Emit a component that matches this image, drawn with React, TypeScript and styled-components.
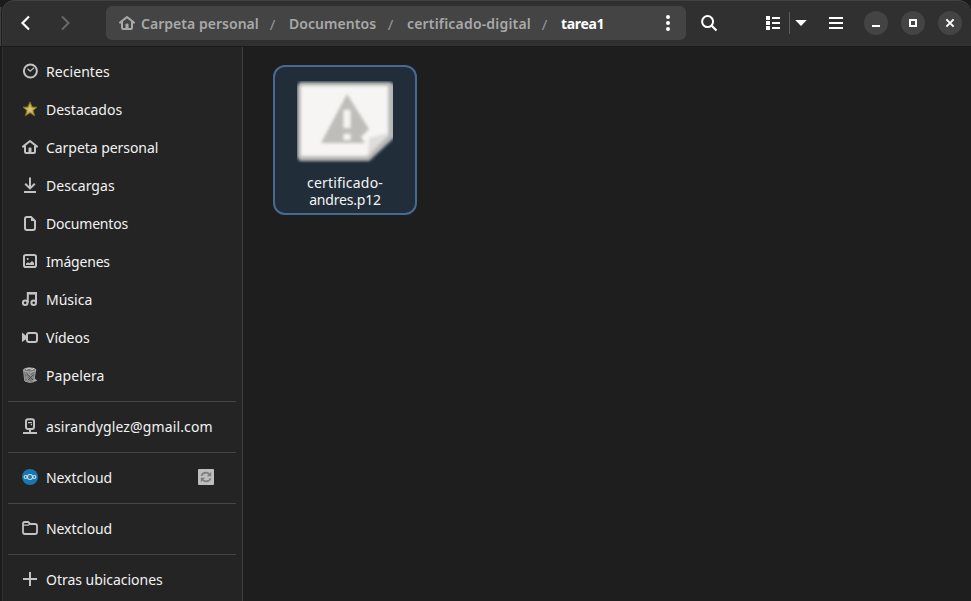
import React from "react";
import styled, { createGlobalStyle } from "styled-components";

const Global = createGlobalStyle`
  *, *::before, *::after { box-sizing: border-box; }
  html, body { margin: 0; height: 100%; overflow: hidden; }
  body { background: #1b1b1e; font-family: "Noto Sans", "Open Sans", sans-serif; }
`;

const Desktop = styled.div`
  width: 971px;
  height: 601px;
  padding-left: 2px;
  overflow: hidden;
  background: linear-gradient(to bottom, #1c1c1c 0 7px, #414141 7px 46px, #1a1a1f 46px);
`;

const Window = styled.main`
  width: 969px;
  height: 601px;
  display: flex;
  flex-direction: column;
  overflow: hidden;
  border-radius: 12px 12px 0 0;
  background: #1e1e1e;
  box-shadow: 0 0 0 1px #1b1b1b;
`;

const HeaderBar = styled.header`
  flex: none;
  height: 46px;
  display: flex;
  align-items: center;
  background: #303030;
  box-shadow: inset 0 1px #414141, inset 1px 0 #383838;
  border-radius: 12px 12px 0 0;
  color: #fff;
`;

const IconButton = styled.button<{ $w?: number; $dim?: boolean }>`
  width: ${(p) => p.$w ?? 34}px;
  height: 34px;
  flex: none;
  padding: 0;
  border: 0;
  display: flex;
  align-items: center;
  justify-content: center;
  background: none;
  color: ${(p) => (p.$dim ? "#686868" : "#fff")};
`;

const NavButtons = styled.div`
  display: flex;
  gap: 5px;
  width: 104px;
  padding-left: 7px;
`;

const PathBar = styled.nav`
  flex: none;
  width: 580px;
  height: 34px;
  display: flex;
  align-items: center;
  padding-left: 13px;
  border-radius: 6px;
  background: #444;
  color: #a5a5a5;
`;

const Crumb = styled.span<{ $w: number; $ls?: number; $current?: boolean }>`
  width: ${(p) => p.$w}px;
  flex: none;
  margin-top: 2px;
  white-space: nowrap;
  font-size: 14px;
  line-height: 20px;
  font-weight: ${(p) => (p.$current ? 700 : 600)};
  letter-spacing: ${(p) => p.$ls ?? 0}px;
  color: ${(p) => (p.$current ? "#fff" : "#a9a9a9")};
`;

const Slash = styled.span`
  width: 31px;
  flex: none;
  margin-top: 2px;
  padding-right: 2px;
  text-align: center;
  font-size: 15px;
  line-height: 20px;
  color: #979797;
`;

const CrumbIcon = styled.span`
  width: 22px;
  height: 16px;
  flex: none;
  color: #a9a9a9;
`;

const PathMenu = styled.div`
  margin-left: auto;
  width: 36px;
  display: flex;
  justify-content: center;
`;

const Tools = styled.div`
  flex: 1;
  display: flex;
  align-items: center;
  padding-left: 6px;
`;

const ViewSwitch = styled.div`
  display: flex;
  align-items: center;
  margin-left: 30px;
  margin-right: 7px;
`;

const Divider = styled.span`
  width: 1px;
  height: 22px;
  margin-left: -1px;
  background: #5c5c5c;
`;

const WindowControls = styled.div`
  display: flex;
  gap: 13px;
  margin-left: 11px;
`;

const ControlButton = styled.button`
  width: 24px;
  height: 24px;
  padding: 0;
  border: 0;
  border-radius: 50%;
  display: flex;
  align-items: center;
  justify-content: center;
  background: #444;
  color: #fff;
`;

const Body = styled.div`
  flex: 1;
  min-height: 0;
  display: flex;
  border-top: 1px solid #1c1a1b;
`;

const Sidebar = styled.aside`
  flex: none;
  width: 241px;
  padding: 6px 6px 0 5px;
  overflow: hidden;
  background: #242424;
  border-left: 1px solid #303033;
  border-right: 1px solid #404040;
`;

const Place = styled.div`
  height: 38px;
  display: flex;
  align-items: center;
  padding: 0 22px 0 14px;
`;

const PlaceIcon = styled.span`
  width: 16px;
  height: 16px;
  margin: -1px 8px 1px 0;
  flex: none;
  color: #c3c3c3;
`;

const StatusIcon = styled(PlaceIcon)`
  margin-right: 0;
`;

const PlaceLabel = styled.span<{ $ls?: number }>`
  flex: 1;
  white-space: nowrap;
  font-size: 14px;
  line-height: 20px;
  letter-spacing: ${(p) => p.$ls ?? 0}px;
  color: #f2f2f2;
`;

const Separator = styled.hr`
  height: 1px;
  border: 0;
  margin: 6px 0;
  background: #454545;
`;

const Files = styled.section`
  flex: 1;
  padding: 18px 30px;
`;

const FileTile = styled.figure`
  width: 144px;
  height: 150px;
  margin: 0;
  border: 2px solid #486993;
  border-radius: 12px;
  background: #222d3a;
  display: flex;
  flex-direction: column;
  align-items: center;
  padding-top: 14px;
`;

const FileName = styled.figcaption`
  margin-top: 11px;
  text-align: center;
  font-size: 14px;
  line-height: 17px;
  color: #f4f5f6;
`;

const NameLine = styled.span<{ $ls: number }>`
  display: block;
  letter-spacing: ${(p) => p.$ls}px;
`;

const Svg = styled.svg`
  display: block;
  overflow: visible;
`;

const ThumbnailSvg = styled(Svg)`
  overflow: hidden;
`;

const Icon = ({ children, size = 16 }: { children: React.ReactNode; size?: number }) => (
  <Svg width={size} height={size} viewBox={`0 0 ${size} ${size}`} fill="none" stroke="currentColor" strokeWidth="2">
    {children}
  </Svg>
);

const HomeIcon = () => (
  <Icon>
    <path d="M1 7.6 8 2l7 5.6" strokeLinejoin="round" strokeLinecap="round" />
    <path d="M3 7v5.8q0 1.2 1.2 1.2h7.6q1.2 0 1.2-1.2V7" />
    <path d="M6.5 14V9.5q0-1 1-1h1q1 0 1 1V14z" fill="currentColor" stroke="none" />
  </Icon>
);

const icons: Record<string, React.ReactNode> = {
  recent: (
    <Icon>
      <circle cx="8.4" cy="8" r="6.5" />
      <path d="M5.5 5.8 8.2 8.2 12 4.8" strokeWidth="1.2" />
    </Icon>
  ),
  star: (
    <Icon>
      <path d="M8 .9 10.1 6 15 6.2 11.1 9.4 12.6 14.7 8 11.8 3.4 14.7 4.9 9.4 1 6.2 5.9 6z" fill="#c2ae50" stroke="#87751c" strokeWidth="1" />
      <path d="M8 3.8 9 7.2 12 7.4 9.6 9.2 10.2 11.5 8 10 5.6 11.6 6.3 9 4 7.4 7 7.2z" fill="#d3c377" stroke="none" />
    </Icon>
  ),
  home: <HomeIcon />,
  download: (
    <Icon>
      <path d="M8 .5V11M3.2 6.8 8 11.4l4.8-4.6M2 15h12" />
    </Icon>
  ),
  document: (
    <Icon>
      <path d="M4.8 2H9l4 4v7q0 2-2 2H5q-2 0-2-2V4q0-2 1.8-2z" />
      <path d="M9 1.5V6h4.5z" fill="currentColor" stroke="none" />
    </Icon>
  ),
  image: (
    <Icon>
      <rect x="2" y="2" width="12" height="12" rx="1.8" />
      <path d="M4 12v-1.6l2-1.2 1.5 1L10 8l2 2v2z" fill="currentColor" stroke="none" />
      <circle cx="5.7" cy="6" r="1" fill="currentColor" stroke="none" />
    </Icon>
  ),
  music: (
    <Icon>
      <circle cx="3.2" cy="11.7" r="2.3" />
      <circle cx="11.7" cy="11.7" r="2.3" />
      <path d="M5.8 11.7V2H14v9.7" />
      <path d="M5 1h9.5v2.6H5z" fill="currentColor" stroke="none" />
    </Icon>
  ),
  video: (
    <Icon>
      <rect x="5" y="4" width="10" height="9" rx="2" />
      <path d="M0 3.5 4.5 7v3L0 13z" fill="currentColor" stroke="none" />
    </Icon>
  ),
  trash: (
    <Icon>
      <path d="M1.5 3.4 2.8 14Q7 16.4 11.8 14.8L13.6 3z" fill="#777" stroke="#999" strokeWidth="1" />
      <path d="m3 6 8.5 8M5 5l7.5 7M3.5 10l4.5 5M12.5 6 4.5 14M10 5l-6.5 6" stroke="#b4b4b4" strokeWidth=".6" />
      <path d="M4.5 7 11 13M11.5 7.5 6 13" stroke="#464646" strokeWidth=".9" />
      <ellipse cx="7.7" cy="3" rx="6.2" ry="2" fill="#777" stroke="#b5b5b5" strokeWidth="1" />
      <path d="M4 2.5 7 1l3 1.5 2-1" stroke="#d1d1d1" strokeWidth="1" />
      <path d="M11 13.3h3.8M13 11.8v3" stroke="#aaa" strokeWidth="1.2" />
    </Icon>
  ),
  account: (
    <Icon>
      <rect x="4" y="1.2" width="8" height="9.8" rx="2" />
      <path d="M6 4.7h4M8.8 6.7H10" strokeWidth="1.2" />
      <path d="M8 11v4M1 15h14" />
    </Icon>
  ),
  nextcloud: (
    <Icon>
      <circle cx="8" cy="8" r="8" fill="#1877ae" stroke="none" />
      <g stroke="#c4dfed" strokeWidth="1.1">
        <circle cx="8" cy="8" r="2.5" />
        <circle cx="3.6" cy="8" r="1.5" />
        <circle cx="12.4" cy="8" r="1.5" />
      </g>
    </Icon>
  ),
  folder: (
    <Icon>
      <path d="M1 12V3.8Q1 2 2.8 2h3.4l2 2H13q2 0 2 2v6q0 2-2 2H3q-2 0-2-2z" strokeWidth="1.8" />
      <path d="M1 5.2h5.2L8.2 4" strokeWidth="1.3" />
    </Icon>
  ),
  plus: (
    <Icon>
      <path d="M8 1v14M1 8h14" />
    </Icon>
  ),
};

const SyncIcon = () => (
  <Icon>
    <rect width="16" height="16" rx="1" fill="#bebebe" stroke="none" />
    <path d="M3.4 6.8Q4.6 3.6 8 3.6q2 0 3.4 1.5M12.6 9.2q-1.2 3.2-4.6 3.2-2 0-3.4-1.5" stroke="#7d7d7d" strokeWidth="1.6" />
    <path d="M13.2 2.7v4.5H8.8zM2.8 13.3V8.8h4.4z" fill="#7d7d7d" stroke="none" />
  </Icon>
);

const Thumbnail = () => (
  <ThumbnailSvg width="96" height="82" viewBox="0 0 96 82">
    <defs>
      <filter id="soft" x="-10%" y="-10%" width="120%" height="120%">
        <feGaussianBlur stdDeviation="1.8" />
      </filter>
    </defs>
    <g filter="url(#soft)">
      <path d="M3 1H93L98 4V56L72 80H3L0 76V5z" fill="#b9b9b7" />
      <path d="M4 5H91V54L70 75H4z" fill="#f6f5f4" />
      <path d="M72 57 91 52 71 75z" fill="#deddda" />
    </g>
    <g filter="url(#soft)">
      <path d="M50 13 24 62H68L64 56 72 48z" fill="#bebdb9" />
      <path d="M50 29V47M50 53V59" stroke="#f6f5f4" strokeWidth="7" />
    </g>
  </ThumbnailSvg>
);

type PlaceData = { icon: string; label: string; ls?: number };

const places: PlaceData[] = [
  { icon: "recent", label: "Recientes", ls: 0.06 },
  { icon: "star", label: "Destacados" },
  { icon: "home", label: "Carpeta personal", ls: -0.05 },
  { icon: "download", label: "Descargas", ls: 0.05 },
  { icon: "document", label: "Documentos", ls: -0.2 },
  { icon: "image", label: "Imágenes", ls: -0.2 },
  { icon: "music", label: "Música" },
  { icon: "video", label: "Vídeos" },
  { icon: "trash", label: "Papelera", ls: 0.1 },
];

const PlaceRow = ({ icon, label, ls, children }: PlaceData & { children?: React.ReactNode }) => (
  <Place>
    <PlaceIcon>{icons[icon]}</PlaceIcon>
    <PlaceLabel $ls={ls}>{label}</PlaceLabel>
    {children}
  </Place>
);

export default function App() {
  return (
    <>
      <Global />
      <Desktop>
        <Window>
          <HeaderBar>
            <NavButtons>
              <IconButton aria-label="Atrás">
                <Icon><path d="M11 1.5 4.5 8l6.5 6.5" strokeWidth="2.2" /></Icon>
              </IconButton>
              <IconButton aria-label="Adelante" $dim>
                <Icon><path d="M5 1.5 11.5 8 5 14.5" /></Icon>
              </IconButton>
            </NavButtons>
            <PathBar>
              <CrumbIcon><HomeIcon /></CrumbIcon>
              <Crumb $w={117} $ls={0.03}>Carpeta personal</Crumb>
              <Slash>/</Slash>
              <Crumb $w={87} $ls={0.05}>Documentos</Crumb>
              <Slash>/</Slash>
              <Crumb $w={123} $ls={0.18}>certificado-digital</Crumb>
              <Slash>/</Slash>
              <Crumb $w={44} $ls={-0.35} $current>tarea1</Crumb>
              <PathMenu>
                <Icon>
                  <g fill="#fff" stroke="none">
                    <circle cx="8" cy="2" r="2" />
                    <circle cx="8" cy="8" r="2" />
                    <circle cx="8" cy="14" r="2" />
                  </g>
                </Icon>
              </PathMenu>
            </PathBar>
            <Tools>
              <IconButton aria-label="Buscar">
                <Icon><circle cx="6.6" cy="6.6" r="5.5" /><path d="m10.5 10.5 5 5" strokeWidth="2.2" /></Icon>
              </IconButton>
              <ViewSwitch>
                <IconButton aria-label="Lista">
                  <Icon>
                    <path d="M7 3h8M7 8h8M7 13h8" />
                    <path d="M1 1h4v4H1zM1 6h4v4H1zM1 11h4v4H1z" fill="currentColor" stroke="none" />
                  </Icon>
                </IconButton>
                <Divider />
                <IconButton aria-label="Opciones de vista" $w={22}>
                  <Icon><path d="M2.2 5h11.6L8 11z" fill="currentColor" stroke="none" /></Icon>
                </IconButton>
              </ViewSwitch>
              <IconButton aria-label="Menú">
                <Icon><path d="M1 3h14M1 8h14M1 13h14" /></Icon>
              </IconButton>
              <WindowControls>
                <ControlButton aria-label="Minimizar">
                  <Icon><path d="M4 11h8" /></Icon>
                </ControlButton>
                <ControlButton aria-label="Maximizar">
                  <Icon><path d="M5 5h6v6H5z" /></Icon>
                </ControlButton>
                <ControlButton aria-label="Cerrar">
                  <Icon><path d="m4.4 4.4 7.2 7.2M11.6 4.4l-7.2 7.2" /></Icon>
                </ControlButton>
              </WindowControls>
            </Tools>
          </HeaderBar>
          <Body>
            <Sidebar>
              {places.map((p) => <PlaceRow key={p.label} {...p} />)}
              <Separator />
              <PlaceRow icon="account" label="asirandyglez@gmail.com" ls={0.13} />
              <Separator />
              <PlaceRow icon="nextcloud" label="Nextcloud" ls={-0.07}>
                <StatusIcon><SyncIcon /></StatusIcon>
              </PlaceRow>
              <Separator />
              <PlaceRow icon="folder" label="Nextcloud" ls={-0.07} />
              <Separator />
              <PlaceRow icon="plus" label="Otras ubicaciones" ls={-0.03} />
            </Sidebar>
            <Files>
              <FileTile>
                <Thumbnail />
                <FileName>
                  <NameLine $ls={0.2}>certificado-</NameLine>
                  <NameLine $ls={-0.2}>andres.p12</NameLine>
                </FileName>
              </FileTile>
            </Files>
          </Body>
        </Window>
      </Desktop>
    </>
  );
}
